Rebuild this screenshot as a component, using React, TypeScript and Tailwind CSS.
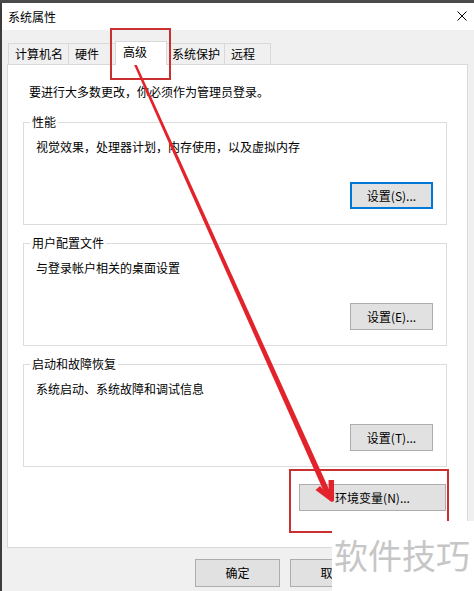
import React from "react";

const font = "font-['Noto_Sans_CJK_SC','Noto_Sans',sans-serif]";

function Btn({ label, className = "", focused = false }: { label: string; className?: string; focused?: boolean }) {
  return (
    <div
      className={`h-[27px] flex items-center justify-center text-[12px] leading-[16px] text-black bg-[#e1e1e1] ${
        focused ? "border-2 border-[#0078d7]" : "border border-[#adadad]"
      } ${className}`}
    >
      {label}
    </div>
  );
}

function Group({ title, text, btn, focused = false, className = "" }: { title: string; text: string; btn: string; focused?: boolean; className?: string }) {
  return (
    <fieldset className={`w-[424px] border border-[#dcdcdc] p-0 m-0 ${className}`}>
      <legend className="ml-[6px] px-[2px] text-[12px] leading-[16px] text-black">{title}</legend>
      <div className="pl-[12px] pr-[13px] pb-[15px]">
        <div className="mt-[9px] text-[12px] leading-[16px] text-black">{text}</div>
        <div className="mt-[27px] flex justify-end">
          <Btn label={btn} focused={focused} className="w-[83px]" />
        </div>
      </div>
    </fieldset>
  );
}

export default function App() {
  return (
    <div className={`relative w-[474px] h-[591px] overflow-hidden bg-[#f0f0f0] ${font}`}>
      <div className="h-[3px] bg-[#4a4a4a]" />
      <div className="flex h-[588px]">
        <div className="w-[2px] bg-[#3c3c3c]" />
        <div className="flex-1 flex flex-col">
          {/* title bar */}
          <div className="h-[27px] bg-white flex items-center justify-between pl-[6px] pr-[7px]">
            <span className="text-[12px] leading-[16px] text-black">系统属性</span>
            <svg width="10" height="10" viewBox="0 0 10 10" className="mb-[2px]">
              <path d="M0.5 0.5 L9.5 9.5 M9.5 0.5 L0.5 9.5" stroke="#000" strokeWidth="1" />
            </svg>
          </div>
          {/* tabs */}
          <div className="mt-[11px] h-[23px] flex items-end pl-[6px] text-[12px] leading-[16px] text-black">
            <div className="w-[60px] h-[21px] border-l border-t border-[#d9d9d9] flex items-center pl-[6px]">计算机名</div>
            <div className="w-[47px] h-[21px] border-l border-t border-[#d9d9d9] flex items-center pl-[6px]">硬件</div>
            <div className="relative z-10 w-[52px] h-[24px] -mb-px bg-white border-l border-t border-r border-[#d9d9d9] flex items-center pl-[7px] pb-[3px]">高级</div>
            <div className="w-[57px] h-[21px] border-t border-[#d9d9d9] flex items-center pl-[5px]">系统保护</div>
            <div className="w-[47px] h-[21px] border-l border-t border-r border-[#d9d9d9] flex items-center pl-[6px]">远程</div>
          </div>
          {/* panel */}
          <div className="ml-[5px] w-[461px] h-[484px] border border-[#d9d9d9] bg-white pl-[15px]">
            <div className="mt-[19px] ml-[6px] text-[12px] leading-[16px] text-black">要进行大多数更改，你必须作为管理员登录。</div>
            <Group className="mt-[14px]" title="性能" text="视觉效果，处理器计划，内存使用，以及虚拟内存" btn="设置(S)..." focused />
            <Group className="mt-[10px]" title="用户配置文件" text="与登录帐户相关的桌面设置" btn="设置(E)..." />
            <Group className="mt-[10px]" title="启动和故障恢复" text="系统启动、系统故障和调试信息" btn="设置(T)..." />
            <div className="mt-[17px] w-[424px] flex justify-end">
              <Btn label="环境变量(N)..." className="w-[147px] mr-[1px]" />
            </div>
          </div>
          {/* bottom buttons */}
          <div className="mt-[11px] flex gap-[10px] pl-[193px]">
            <Btn label="确定" className="w-[85px] h-[28px]" />
            <Btn label="取消" className="w-[85px] h-[28px]" />
          </div>
        </div>
      </div>

      {/* red annotations */}
      <svg className="absolute left-0 top-0 pointer-events-none" width="474" height="591" viewBox="0 0 474 591">
        <rect x="111" y="29" width="59" height="50" fill="none" stroke="#c9302f" strokeWidth="2" />
        <rect x="290" y="470" width="158" height="62" fill="none" stroke="#c9302f" strokeWidth="2" />
        <polygon points="133.9,64.5 136.1,63.5 331.6,494.9 326.4,497.2" fill="#e3232b" />
        <polygon points="331.5,502 315.5,490 320,486 329,495.5 328.5,480 334,480 334,501" fill="#e3232b" />
      </svg>

      {/* watermark */}
      <div className="absolute left-[332px] top-[521px] w-[142px] h-[70px] bg-white pl-[2px] pt-[17px]">
        <div className="text-[34px] leading-[34px] text-[#c6c6c6] whitespace-nowrap">软件技巧</div>
      </div>
    </div>
  );
}
